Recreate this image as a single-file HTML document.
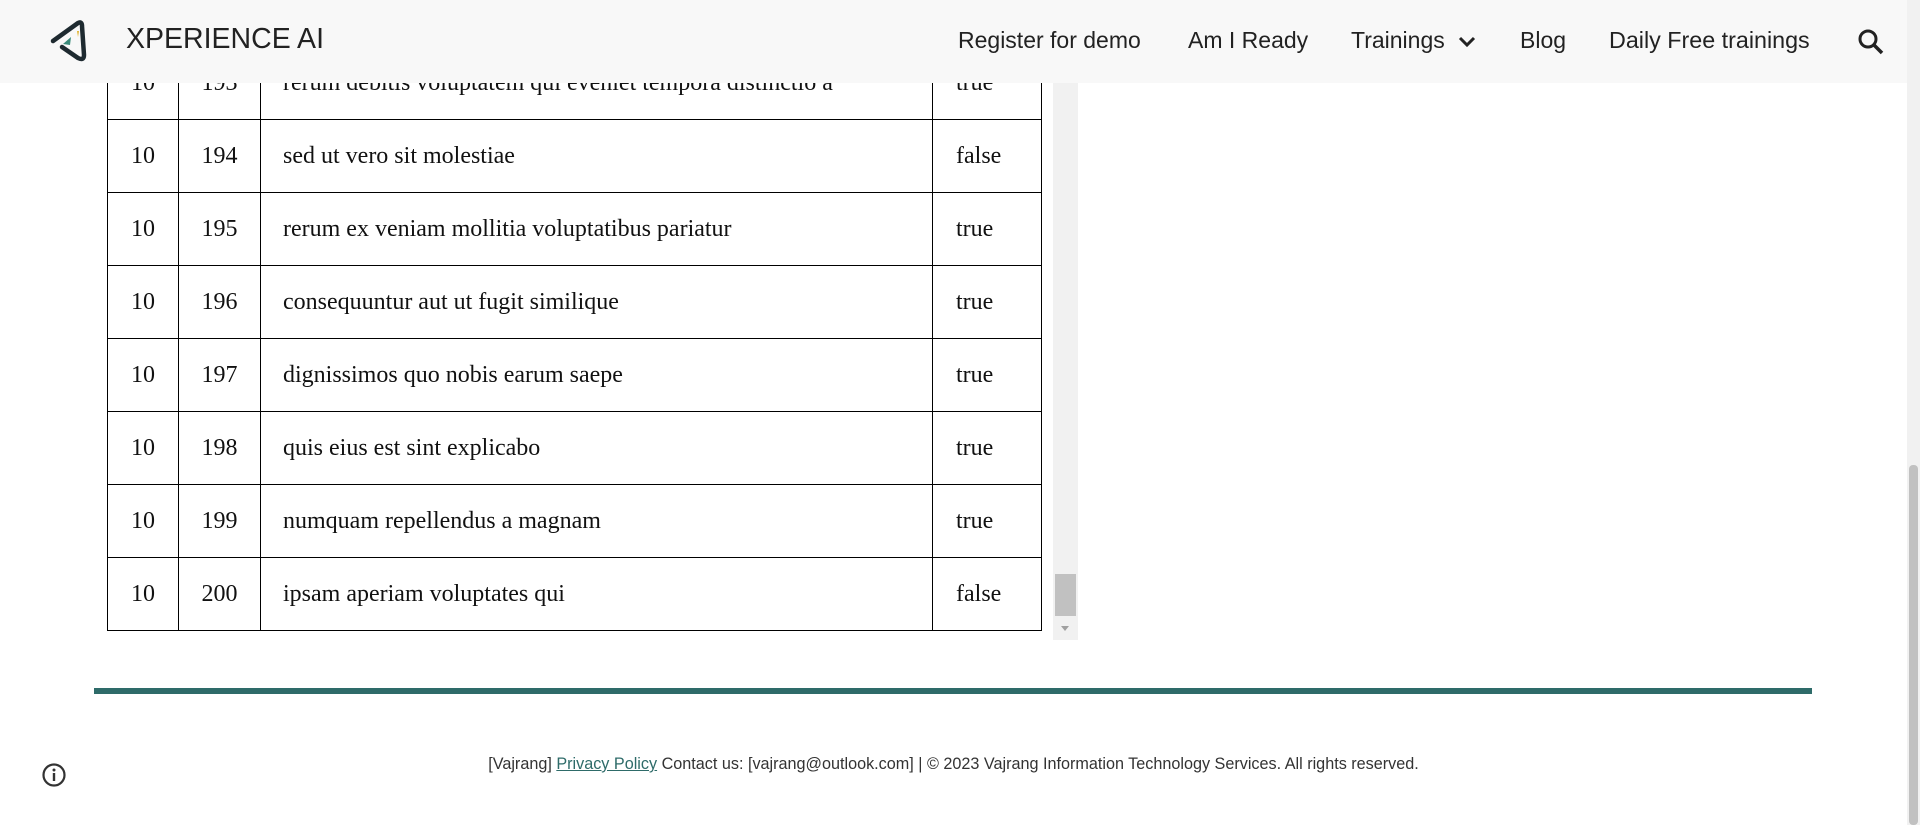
<!DOCTYPE html>
<html><head><meta charset="utf-8"><style>
body{margin:0;width:1920px;height:825px;overflow:hidden;background:#fff;position:relative;font-family:"Liberation Sans",sans-serif}
.hdr{position:absolute;left:0;top:0;width:1907px;height:83px;background:#f8f8f8;z-index:2}
.nav{position:absolute;top:27px;font-size:23px;color:#222;white-space:nowrap}
table{position:absolute;left:107px;top:46px;border-collapse:collapse;font-family:"Liberation Serif",serif;font-size:24px;color:#111}
td{border:1px solid #000;height:72px;padding:0}
.sb{position:absolute;left:1053px;top:83px;width:25px;height:557px;background:#f1f1f1}
</style></head><body>
<div class="hdr">
<svg style="position:absolute;left:46px;top:18px" width="50" height="50" viewBox="46 18 50 50">
<path d="M53 41 L78 23 Q82 21 82 26 L84 55 Q84 61 78 58 L62 47" fill="none" stroke="#1e2a30" stroke-width="4.5" stroke-linecap="round" stroke-linejoin="round"/>
<path d="M63 44 L71 37 L70 45 Z" fill="#3a8a7a"/>
<path d="M77 31 L79 31 L78 37 Z" fill="#e0b430"/>
</svg>
<div class="nav" style="left:126px;top:23px;font-size:28.5px;color:#222">XPERIENCE AI</div>
<div class="nav" style="left:958px">Register for demo</div>
<div class="nav" style="left:1188px">Am I Ready</div>
<div class="nav" style="left:1351px">Trainings</div>
<svg style="position:absolute;left:1457px;top:35px" width="20" height="14" viewBox="0 0 20 14"><path d="M3 3 L10 10 L17 3" fill="none" stroke="#222" stroke-width="3"/></svg>
<div class="nav" style="left:1520px">Blog</div>
<div class="nav" style="left:1609px;font-size:23.3px">Daily Free trainings</div>
<svg style="position:absolute;left:1857px;top:28px" width="28" height="28" viewBox="0 0 28 28"><circle cx="11" cy="11" r="8" fill="none" stroke="#222" stroke-width="3"/><path d="M17 17 L25 25" stroke="#222" stroke-width="3.5"/></svg>
</div>
<table>
<colgroup><col style="width:71px"><col style="width:82px"><col style="width:672px"><col style="width:109px"></colgroup>
<tr><td style="text-align:center">10</td><td style="text-align:center">193</td><td style="padding-left:22px">rerum debitis voluptatem qui eveniet tempora distinctio a</td><td style="padding-left:23px">true</td></tr>
<tr><td style="text-align:center">10</td><td style="text-align:center">194</td><td style="padding-left:22px">sed ut vero sit molestiae</td><td style="padding-left:23px">false</td></tr>
<tr><td style="text-align:center">10</td><td style="text-align:center">195</td><td style="padding-left:22px">rerum ex veniam mollitia voluptatibus pariatur</td><td style="padding-left:23px">true</td></tr>
<tr><td style="text-align:center">10</td><td style="text-align:center">196</td><td style="padding-left:22px">consequuntur aut ut fugit similique</td><td style="padding-left:23px">true</td></tr>
<tr><td style="text-align:center">10</td><td style="text-align:center">197</td><td style="padding-left:22px">dignissimos quo nobis earum saepe</td><td style="padding-left:23px">true</td></tr>
<tr><td style="text-align:center">10</td><td style="text-align:center">198</td><td style="padding-left:22px">quis eius est sint explicabo</td><td style="padding-left:23px">true</td></tr>
<tr><td style="text-align:center">10</td><td style="text-align:center">199</td><td style="padding-left:22px">numquam repellendus a magnam</td><td style="padding-left:23px">true</td></tr>
<tr><td style="text-align:center">10</td><td style="text-align:center">200</td><td style="padding-left:22px">ipsam aperiam voluptates qui</td><td style="padding-left:23px">false</td></tr>
</table>
<div class="sb"><div style="position:absolute;left:2px;top:491px;width:21px;height:42px;background:#c1c1c1"></div><div style="position:absolute;left:8px;top:543px;width:0;height:0;border-left:4px solid transparent;border-right:4px solid transparent;border-top:5px solid #a0a0a0"></div></div>
<div style="position:absolute;left:94px;top:688px;width:1718px;height:6px;background:#2e6b69"></div>
<div style="position:absolute;left:0;width:1907px;top:755px;text-align:center;font-size:16.2px;color:#333">[Vajrang] <span style="color:#2e6b69;text-decoration:underline">Privacy Policy</span> Contact us: [vajrang@outlook.com] | © 2023 Vajrang Information Technology Services. All rights reserved.</div>
<svg style="position:absolute;left:41px;top:762px" width="26" height="26" viewBox="0 0 26 26"><circle cx="13" cy="13" r="10.5" fill="none" stroke="#333" stroke-width="2.2"/><circle cx="13" cy="8" r="1.5" fill="#333"/><rect x="11.8" y="11" width="2.4" height="8" fill="#333"/></svg>
<div style="position:absolute;left:1907px;top:0;width:13px;height:825px;background:#f1f1f1"><div style="position:absolute;left:2px;top:465px;width:9px;height:360px;background:#c1c1c1;border-radius:4px"></div></div>
</body></html>
